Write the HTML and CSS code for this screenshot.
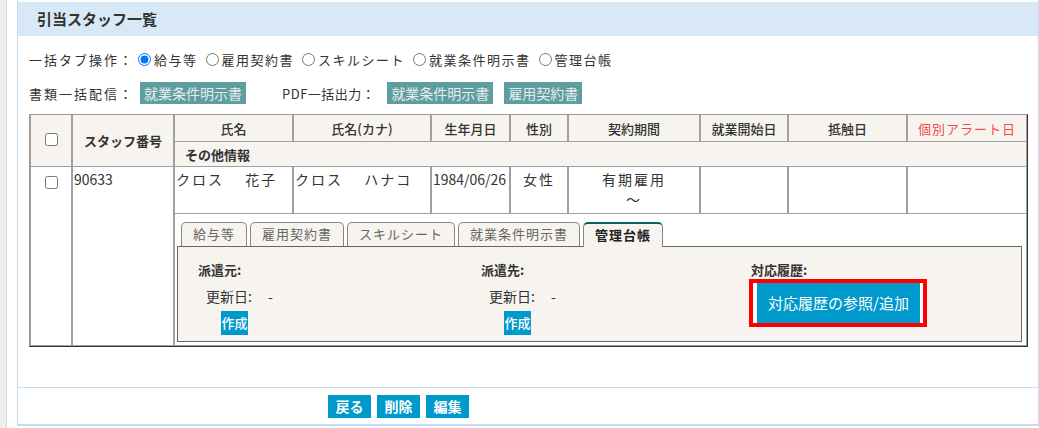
FILE: index.html
```html
<!DOCTYPE html>
<html lang="ja">

<head>
    <meta charset="UTF-8">
    <title>引当スタッフ一覧</title>
    <link rel="stylesheet" href="styles.css">
</head>

<body>
    <div class="page">
        <div class="panel">
            <h2 class="panel-title">引当スタッフ一覧</h2>
            <div class="panel-body">
                <div class="line">
                    <span class="label">一括タブ操作：</span>
                    <label class="radio"><input type="radio" name="tab" checked>給与等</label>
                    <label class="radio"><input type="radio" name="tab">雇用契約書</label>
                    <label class="radio"><input type="radio" name="tab">スキルシート</label>
                    <label class="radio"><input type="radio" name="tab">就業条件明示書</label>
                    <label class="radio"><input type="radio" name="tab">管理台帳</label>
                </div>
                <div class="line line2">
                    <span class="label">書類一括配信：</span>
                    <span class="doc-btn">就業条件明示書</span>
                    <span class="label pdf">PDF一括出力：</span>
                    <span class="doc-btn">就業条件明示書</span>
                    <span class="doc-btn">雇用契約書</span>
                </div>

                <table class="list">
                    <colgroup>
                        <col style="width:42px">
                        <col style="width:102px">
                        <col style="width:119px">
                        <col style="width:138px">
                        <col style="width:79px">
                        <col style="width:58px">
                        <col style="width:132px">
                        <col style="width:88px">
                        <col style="width:119px">
                        <col>
                    </colgroup>
                    <tr class="head1">
                        <th rowspan="2"><input type="checkbox"></th>
                        <th rowspan="2" class="bold">スタッフ番号</th>
                        <th>氏名</th>
                        <th>氏名(カナ)</th>
                        <th>生年月日</th>
                        <th>性別</th>
                        <th>契約期間</th>
                        <th>就業開始日</th>
                        <th>抵触日</th>
                        <th class="alert">個別アラート日</th>
                    </tr>
                    <tr class="head2">
                        <th colspan="8" class="other">その他情報</th>
                    </tr>
                    <tr class="data">
                        <td rowspan="2" class="chk"><input type="checkbox"></td>
                        <td rowspan="2">90633</td>
                        <td class="wide">クロス　 花子</td>
                        <td class="wide">クロス　 ハナコ</td>
                        <td>1984/06/26</td>
                        <td class="center wide">女性</td>
                        <td class="center wide">有期雇用<br>～</td>
                        <td></td>
                        <td></td>
                        <td></td>
                    </tr>
                    <tr class="detail">
                        <td colspan="8">
                            <div class="tabs">
                                <span class="tab">給与等</span>
                                <span class="tab">雇用契約書</span>
                                <span class="tab">スキルシート</span>
                                <span class="tab">就業条件明示書</span>
                                <span class="tab active">管理台帳</span>
                            </div>
                            <div class="tab-body">
                                <div class="col">
                                    <div class="sub">派遣元:</div>
                                    <div class="upd">更新日:<span class="dash">-</span></div>
                                    <span class="make">作成</span>
                                </div>
                                <div class="col">
                                    <div class="sub">派遣先:</div>
                                    <div class="upd">更新日:<span class="dash">-</span></div>
                                    <span class="make">作成</span>
                                </div>
                                <div class="col">
                                    <div class="sub">対応履歴:</div>
                                    <div class="mark">
                                        <span class="history">対応履歴の参照/追加</span>
                                    </div>
                                </div>
                            </div>
                        </td>
                    </tr>
                </table>
            </div>
            <div class="footer">
                <span class="btn">戻る</span>
                <span class="btn">削除</span>
                <span class="btn">編集</span>
            </div>
        </div>
    </div>
</body>

</html>
```
FILE: styles.css
```css
* {
    padding: 0;
    margin: 0;
    box-sizing: border-box;
}

body {
    background-color: #f0efea;
    font-family: "Noto Sans CJK JP", "Noto Sans", sans-serif;
    font-size: 13px;
    color: #333;
    height: 428px;
    overflow: hidden;
}

.page {
    margin-left: 6px;
    height: 428px;
    background-color: #fff;
    border-left: 1px solid #c3dcf2;
    padding: 0 0 0 10px;
}

.panel {
    width: 1022px;
    height: 426px;
    border: 1px solid #c3dcf2;
    border-top: 0;
    padding-top: 2px;
}

.panel-title {
    height: 34px;
    line-height: 34px;
    background-color: #d9e8f7;
    padding-left: 19px;
    font-size: 15px;
    font-weight: bold;
    color: #333;
}

.panel-body {
    padding: 12px 0 40px 11px;
}

.line {
    display: flex;
    align-items: center;
    height: 22px;
    letter-spacing: 2px;
}

.line2 {
    margin-top: 12px;
    margin-bottom: 10px;
}

.label {
    margin-right: 4px;
}

.line2 .label {
    margin-right: 6px;
}

.radio {
    display: flex;
    align-items: center;
    margin-right: 8px;
    letter-spacing: 1.5px;
}

.radio input {
    width: 13px;
    height: 13px;
    margin: 0 3px 0 0;
}

.doc-btn {
    display: inline-block;
    height: 22px;
    line-height: 22px;
    padding: 0 4px;
    background-color: #5f9ea0;
    color: #e4ecec;
    font-size: 14px;
    letter-spacing: 0;
}

.line2 .pdf {
    margin-left: 36px;
    letter-spacing: 0.5px;
    margin-right: 12px;
}

.line2 .doc-btn + .doc-btn {
    margin-left: 11px;
}

.list {
    width: 999px;
    table-layout: fixed;
    border-collapse: separate;
    border-spacing: 0;
    border: 1px solid;
    border-color: #999 #333 #333 #999;
}

.list th,
.list td {
    border-right: 1px solid #a0a0a0;
    border-bottom: 1px solid #a0a0a0;
    border-left: 1px solid #a0a0a0;
    margin: 0;
}

.list th {
    background-color: #f7f4ef;
    font-weight: 500;
    height: 27px;
    text-align: center;
}

.list th.bold,
.list th.other {
    font-weight: bold;
}

.list th.other {
    text-align: left;
    padding-left: 10px;
    height: 25px;
}

.list th.alert {
    color: #f44b4b;
    font-weight: normal;
    letter-spacing: 1px;
}

.list input[type=checkbox] {
    width: 13px;
    height: 13px;
}

.data td {
    height: 47px;
    vertical-align: top;
    padding: 2px 1px;
    font-size: 14px;
}

.list td.chk {
    text-align: center;
    padding-top: 6px;
}

.wide {
    letter-spacing: 2px;
    white-space: pre;
}

.center {
    text-align: center;
}

.detail > td {
    padding: 5px 4px 3px 2px;
    height: 131px;
}

.tabs {
    display: flex;
    padding-left: 4px;
    gap: 3px;
    height: 27px;
    align-items: flex-end;
}

.tab {
    height: 24px;
    line-height: 22px;
    border: 1px solid #888;
    border-bottom: 0;
    border-radius: 5px 5px 0 0;
    background-color: #f7f4ef;
    color: #666;
    padding: 0 11px;
    letter-spacing: 1px;
}

.tab.active {
    height: 25px;
    border-color: #00665f #888 #888 #888;
    border-top-width: 2px;
    color: #222;
    font-weight: bold;
    position: relative;
    top: 1px;
    background-color: #f7f4ef;
}

.tab-body {
    height: 96px;
    border: 1px solid #666;
    background-color: #f7f4ef;
    display: grid;
    grid-template-columns: 283px 270px auto;
    padding: 14px 0 0 20px;
}

.sub {
    font-weight: bold;
    color: #333;
    height: 18px;
    line-height: 18px;
}

.upd {
    margin: 8px 0 0 8px;
    font-size: 14px;
    height: 18px;
    line-height: 18px;
}

.dash {
    margin-left: 16px;
}

.make {
    display: inline-block;
    margin: 6px 0 0 23px;
    width: 27px;
    height: 24px;
    line-height: 24px;
    background-color: #0099cc;
    color: #fff;
    font-size: 13px;
    font-weight: 500;
    text-align: center;
    white-space: nowrap;
}

.mark {
    margin: 0 0 0 -2px;
    width: 178px;
    height: 48px;
    border: 4px solid #ff0000;
    padding: 0 3px 0 4px;
    background-color: #fff;
    display: flex;
}

.history {
    flex: 1;
    background-color: #0099cc;
    color: #fff;
    font-size: 15px;
    text-align: center;
    line-height: 40px;
}

.footer {
    border-top: 1px solid #c3dcf2;
    border-bottom: 1px solid #c3dcf2;
    padding: 7px 0 6px 310px;
    display: flex;
    gap: 6px;
    height: 38px;
}

.btn {
    width: 43px;
    height: 23px;
    line-height: 23px;
    text-align: center;
    background-color: #0099cc;
    color: #fff;
    font-size: 14px;
    font-weight: bold;
}
```
